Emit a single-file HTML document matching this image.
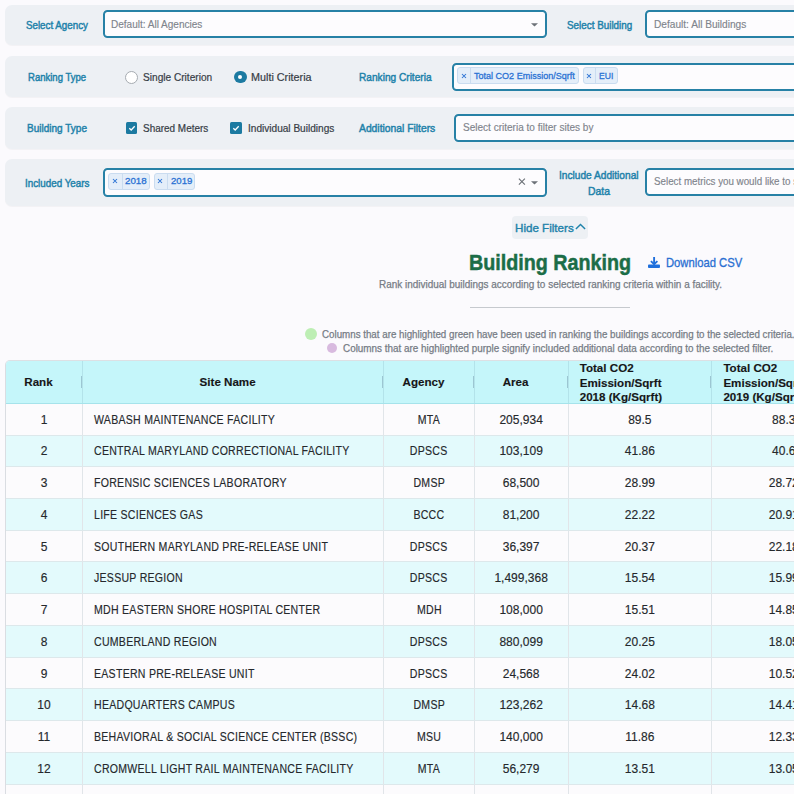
<!DOCTYPE html>
<html><head><meta charset="utf-8">
<style>
*{box-sizing:border-box;margin:0;padding:0}
html,body{width:794px;height:794px;overflow:hidden;background:#fbfafd;font-family:"Liberation Sans",sans-serif}
.a{position:absolute}
.tx{position:absolute;white-space:nowrap;line-height:1;transform-origin:0 50%}
.panel{position:absolute;left:5px;width:1100px;background:#edf0f4;border-radius:7px;box-shadow:0 1px 1px rgba(0,0,0,0.035)}
.inp{position:absolute;background:#fdfcfe;border:2px solid #2781a6;border-radius:4.5px}
.tag{position:absolute;background:#e4eef9;border:1px solid #cadcf0;border-radius:3px}
.tdiv{position:absolute;top:0;bottom:0;width:1px;background:#cadcf0}
#tw{position:absolute;left:5px;top:360px;width:900px;height:440px;border-left:1px solid #dadde2;border-top:1px solid #dde0e4;border-top-left-radius:5px;overflow:hidden}
table{position:absolute;left:0;top:-1px;border-collapse:collapse;table-layout:fixed;width:849.4px;font-size:12px;color:#25282c;-webkit-text-stroke:0.15px #25282c}
th{height:43.4px;background:#c5f6fa;font-weight:bold;font-size:11.6px;text-align:center;vertical-align:middle;position:relative;border-left:1px solid #b3e3ea;border-bottom:1px solid #a6e3eb;line-height:14px;padding-top:0.5px;color:#151517}
th:first-child{border-left:none}
th.c{padding-right:11px}
th.ml{text-align:left;padding-left:11.2px;font-size:11.6px;line-height:14.2px;padding-top:0}
th.ml span{position:relative;top:1.2px;display:block}
td{height:31.73px;text-align:center;vertical-align:middle;border-left:1px solid #e1e5e9;border-bottom:1px solid #dde8eb;background:#fcfbfd;padding-top:1px;white-space:nowrap}
tr:nth-child(even) td{background:#e3fafc}
td:first-child{border-left:none}
td.sn{text-align:left;padding-left:11.5px}
.s1{display:inline-block;font-size:12px;letter-spacing:0.3px;transform:scaleX(0.88);transform-origin:0 50%}
.s2{display:inline-block;font-size:12px;letter-spacing:0.3px;text-indent:0.3px;transform:scaleX(0.88);transform-origin:50% 50%}
th .h{position:absolute;right:0;top:16px;width:1px;height:12px;background:#9cc6d2}
</style></head><body>

<div class="panel" style="top:5px;height:40px"></div>
<div class="panel" style="top:56px;height:41px"></div>
<div class="panel" style="top:107px;height:42px"></div>
<div class="panel" style="top:159px;height:47px"></div>

<div class="inp" style="left:103px;top:10px;width:444px;height:27.8px"></div>
<div class="inp" style="left:645px;top:10px;width:400px;height:27.8px"></div>
<div class="inp" style="left:452px;top:62.7px;width:600px;height:27.9px"></div>
<div class="inp" style="left:454px;top:113.6px;width:600px;height:28.1px"></div>
<div class="inp" style="left:103px;top:168.4px;width:444px;height:28.4px"></div>
<div class="inp" style="left:645px;top:168.2px;width:400px;height:28px"></div>

<!-- carets -->
<svg class="a" style="left:530px;top:22px" width="9" height="6" viewBox="0 0 9 6"><path d="M1 1.2 L4.5 4.6 L8 1.2Z" fill="#6d7278"/></svg>
<svg class="a" style="left:530px;top:180px" width="9" height="6" viewBox="0 0 9 6"><path d="M1 1.2 L4.5 4.6 L8 1.2Z" fill="#6d7278"/></svg>
<svg class="a" style="left:516.5px;top:177px" width="9" height="9" viewBox="0 0 9 9"><path d="M1.9 1.6 L7.9 7.6 M7.9 1.6 L1.9 7.6" stroke="#6d7278" stroke-width="1.15"/></svg>

<!-- radios -->
<div class="a" style="left:125px;top:70.6px;width:13px;height:13px;border:1px solid #a6abb1;border-radius:50%;background:#fff"></div>
<div class="a" style="left:234.1px;top:70.8px;width:12.6px;height:12.6px;border-radius:50%;background:#1c7aa1"></div>
<div class="a" style="left:238.4px;top:75.1px;width:4px;height:4px;border-radius:50%;background:#fff"></div>

<!-- checkboxes -->
<div class="a" style="left:125.6px;top:122px;width:11.7px;height:11.8px;background:#1c7aa1;border-radius:1.5px"></div>
<svg class="a" style="left:125.6px;top:122px" width="12" height="12" viewBox="0 0 12 12"><path d="M3.3 6.2 L5.2 8 L8.7 4.3" stroke="#fff" stroke-width="1.3" fill="none"/></svg>
<div class="a" style="left:230.4px;top:122px;width:11.7px;height:11.8px;background:#1c7aa1;border-radius:1.5px"></div>
<svg class="a" style="left:230.4px;top:122px" width="12" height="12" viewBox="0 0 12 12"><path d="M3.3 6.2 L5.2 8 L8.7 4.3" stroke="#fff" stroke-width="1.3" fill="none"/></svg>

<!-- tags -->
<div class="tag" style="left:457.2px;top:67px;width:121.6px;height:17px"><div class="tdiv" style="left:12.3px"></div></div>
<div class="tag" style="left:582.5px;top:67px;width:35.2px;height:17px"><div class="tdiv" style="left:11.2px"></div></div>
<div class="tag" style="left:108.2px;top:173px;width:41.6px;height:16.5px"><div class="tdiv" style="left:12.6px"></div></div>
<div class="tag" style="left:153.5px;top:173px;width:41.9px;height:16.5px"><div class="tdiv" style="left:12.6px"></div></div>
<svg class="a" style="left:461px;top:72.5px" width="6" height="6" viewBox="0 0 6 6"><path d="M1 1 L5 5 M5 1 L1 5" stroke="#2a72d4" stroke-width="1.05"/></svg>
<svg class="a" style="left:585.5px;top:72.5px" width="6" height="6" viewBox="0 0 6 6"><path d="M1 1 L5 5 M5 1 L1 5" stroke="#2a72d4" stroke-width="1.05"/></svg>
<svg class="a" style="left:111.5px;top:178.3px" width="6" height="6" viewBox="0 0 6 6"><path d="M1 1 L5 5 M5 1 L1 5" stroke="#2a72d4" stroke-width="1.05"/></svg>
<svg class="a" style="left:156.8px;top:178.3px" width="6" height="6" viewBox="0 0 6 6"><path d="M1 1 L5 5 M5 1 L1 5" stroke="#2a72d4" stroke-width="1.05"/></svg>

<!-- hide filters -->
<div class="a" style="left:512px;top:216.3px;width:76px;height:22.7px;background:#edf0f4;border-radius:4px"></div>
<svg class="a" style="left:574px;top:222px" width="13" height="9" viewBox="0 0 13 9"><path d="M1.9 7.1 L6.5 2.6 L11.1 7.1" stroke="#1e82aa" stroke-width="1.45" fill="none"/></svg>

<!-- download icon -->
<svg class="a" style="left:647px;top:255px" width="14" height="14" viewBox="0 0 14 14"><path d="M7.1 2 V9" stroke="#1f6fdc" stroke-width="1.9" fill="none"/><path d="M3.9 6.1 L7.1 9.2 L10.4 6.1" stroke="#1f6fdc" stroke-width="1.8" fill="none"/><rect x="1" y="9.5" width="12" height="3.5" rx="0.9" fill="#1f6fdc"/></svg>

<div class="a" style="left:469.6px;top:307.4px;width:160.4px;height:1px;background:#c6c9ce"></div>
<div class="a" style="left:305.2px;top:328.1px;width:11.9px;height:11.9px;border-radius:50%;background:#bdeeb4"></div>
<div class="a" style="left:327px;top:342.7px;width:10.4px;height:10.4px;border-radius:50%;background:#d8badf"></div>

<div id="l1" class="tx" style="left:26.30px;top:20.00px;font-size:10.6px;font-weight:normal;color:#1e82aa;-webkit-text-stroke:0.45px #1e82aa;transform:scaleX(0.9225);">Select Agency</div>
<div id="p1" class="tx" style="left:111.40px;top:20.10px;font-size:10.2px;font-weight:normal;color:#7f848c;-webkit-text-stroke:0.15px #7f848c;transform:scaleX(0.9829);">Default: All Agencies</div>
<div id="l2" class="tx" style="left:566.60px;top:20.00px;font-size:10.6px;font-weight:normal;color:#1e82aa;-webkit-text-stroke:0.45px #1e82aa;transform:scaleX(0.9308);">Select Building</div>
<div id="p2" class="tx" style="left:653.50px;top:20.10px;font-size:10.2px;font-weight:normal;color:#7f848c;-webkit-text-stroke:0.15px #7f848c;transform:scaleX(0.9938);">Default: All Buildings</div>
<div id="l3" class="tx" style="left:28.30px;top:72.40px;font-size:10.6px;font-weight:normal;color:#1e82aa;-webkit-text-stroke:0.45px #1e82aa;transform:scaleX(0.8998);">Ranking Type</div>
<div id="t1" class="tx" style="left:142.80px;top:72.60px;font-size:10.2px;font-weight:normal;color:#373d46;-webkit-text-stroke:0.2px #373d46;transform:scaleX(0.9934);">Single Criterion</div>
<div id="t2" class="tx" style="left:251.20px;top:72.60px;font-size:10.2px;font-weight:normal;color:#373d46;-webkit-text-stroke:0.2px #373d46;transform:scaleX(1.0590);">Multi Criteria</div>
<div id="l4" class="tx" style="left:358.90px;top:72.00px;font-size:10.6px;font-weight:normal;color:#1e82aa;-webkit-text-stroke:0.45px #1e82aa;transform:scaleX(0.9554);">Ranking Criteria</div>
<div id="g1" class="tx" style="left:474.10px;top:70.50px;font-size:9.6px;font-weight:normal;color:#2a72d4;-webkit-text-stroke:0.3px #2a72d4;transform:scaleX(0.9410);">Total CO2 Emission/Sqrft</div>
<div id="g2" class="tx" style="left:599.20px;top:70.50px;font-size:9.6px;font-weight:normal;color:#2a72d4;-webkit-text-stroke:0.3px #2a72d4;transform:scaleX(0.8947);">EUI</div>
<div id="l5" class="tx" style="left:27.30px;top:123.20px;font-size:10.6px;font-weight:normal;color:#1e82aa;-webkit-text-stroke:0.45px #1e82aa;transform:scaleX(0.9454);">Building Type</div>
<div id="t3" class="tx" style="left:142.90px;top:123.80px;font-size:10.2px;font-weight:normal;color:#373d46;-webkit-text-stroke:0.2px #373d46;transform:scaleX(0.9769);">Shared Meters</div>
<div id="t4" class="tx" style="left:247.70px;top:123.80px;font-size:10.2px;font-weight:normal;color:#373d46;-webkit-text-stroke:0.2px #373d46;transform:scaleX(0.9894);">Individual Buildings</div>
<div id="l6" class="tx" style="left:358.90px;top:123.20px;font-size:10.6px;font-weight:normal;color:#1e82aa;-webkit-text-stroke:0.45px #1e82aa;transform:scaleX(0.9740);">Additional Filters</div>
<div id="p3" class="tx" style="left:462.80px;top:123.40px;font-size:10.2px;font-weight:normal;color:#7f848c;-webkit-text-stroke:0.15px #7f848c;transform:scaleX(0.9842);">Select criteria to filter sites by</div>
<div id="l7" class="tx" style="left:25.10px;top:177.90px;font-size:10.6px;font-weight:normal;color:#1e82aa;-webkit-text-stroke:0.45px #1e82aa;transform:scaleX(0.9270);">Included Years</div>
<div id="g3" class="tx" style="left:125.10px;top:176.30px;font-size:9.6px;font-weight:normal;color:#2a72d4;-webkit-text-stroke:0.3px #2a72d4;transform:scaleX(1.0173);">2018</div>
<div id="g4" class="tx" style="left:170.70px;top:176.30px;font-size:9.6px;font-weight:normal;color:#2a72d4;-webkit-text-stroke:0.3px #2a72d4;transform:scaleX(1.0027);">2019</div>
<div id="l8" class="tx" style="left:559.30px;top:169.60px;font-size:10.6px;font-weight:normal;color:#1e82aa;-webkit-text-stroke:0.45px #1e82aa;transform:scaleX(0.9579);">Include Additional</div>
<div id="l9" class="tx" style="left:588.10px;top:186.20px;font-size:10.6px;font-weight:normal;color:#1e82aa;-webkit-text-stroke:0.45px #1e82aa;transform:scaleX(0.9819);">Data</div>
<div id="p4" class="tx" style="left:653.50px;top:177.00px;font-size:10.2px;font-weight:normal;color:#7f848c;-webkit-text-stroke:0.15px #7f848c;transform:scaleX(0.9600);">Select metrics you would like to see</div>
<div id="hf" class="tx" style="left:514.90px;top:222.70px;font-size:11.8px;font-weight:normal;color:#1e82aa;-webkit-text-stroke:0.4px #1e82aa;transform:scaleX(0.9838);">Hide Filters</div>
<div id="ti" class="tx" style="left:469.40px;top:251.20px;font-size:22.8px;font-weight:bold;color:#1b6d47;-webkit-text-stroke:0.5px #1b6d47;transform:scaleX(0.8648);">Building Ranking</div>
<div id="dl" class="tx" style="left:666.00px;top:257.10px;font-size:12.2px;font-weight:normal;color:#2a6fd2;-webkit-text-stroke:0.3px #2a6fd2;transform:scaleX(0.9223);">Download CSV</div>
<div id="st" class="tx" style="left:379.00px;top:280.00px;font-size:10px;font-weight:normal;color:#767c85;-webkit-text-stroke:0.25px #767c85;transform:scaleX(0.9945);">Rank individual buildings according to selected ranking criteria within a facility.</div>
<div id="lg1" class="tx" style="left:321.70px;top:329.50px;font-size:10px;font-weight:normal;color:#767c85;-webkit-text-stroke:0.25px #767c85;transform:scaleX(0.9760);">Columns that are highlighted green have been used in ranking the buildings according to the selected criteria.</div>
<div id="lg2" class="tx" style="left:342.80px;top:343.80px;font-size:10px;font-weight:normal;color:#767c85;-webkit-text-stroke:0.25px #767c85;transform:scaleX(0.9896);">Columns that are highlighted purple signify included additional data according to the selected filter.</div>

<div id="tw"><table id="tbl"><colgroup><col style="width:76.4px"><col style="width:300.9px"><col style="width:90.4px"><col style="width:93.7px"><col style="width:143.5px"><col style="width:143.5px"></colgroup>
<thead><tr><th class="c">Rank<i class="h"></i></th><th class="c">Site Name<i class="h"></i></th><th class="c">Agency<i class="h"></i></th><th class="c">Area<i class="h"></i></th><th class="ml"><span>Total CO2<br>Emission/Sqrft<br>2018 (Kg/Sqrft)</span><i class="h"></i></th><th class="ml"><span>Total CO2<br>Emission/Sqrft<br>2019 (Kg/Sqrft)</span></th></tr></thead><tbody>
<tr><td>1</td><td class="sn"><span class="s1">WABASH MAINTENANCE FACILITY</span></td><td><span class="s2">MTA</span></td><td>205,934</td><td>89.5</td><td class="l2">88.3</td></tr>
<tr><td>2</td><td class="sn"><span class="s1">CENTRAL MARYLAND CORRECTIONAL FACILITY</span></td><td><span class="s2">DPSCS</span></td><td>103,109</td><td>41.86</td><td class="l2">40.6</td></tr>
<tr><td>3</td><td class="sn"><span class="s1">FORENSIC SCIENCES LABORATORY</span></td><td><span class="s2">DMSP</span></td><td>68,500</td><td>28.99</td><td class="l2">28.72</td></tr>
<tr><td>4</td><td class="sn"><span class="s1">LIFE SCIENCES GAS</span></td><td><span class="s2">BCCC</span></td><td>81,200</td><td>22.22</td><td class="l2">20.91</td></tr>
<tr><td>5</td><td class="sn"><span class="s1">SOUTHERN MARYLAND PRE-RELEASE UNIT</span></td><td><span class="s2">DPSCS</span></td><td>36,397</td><td>20.37</td><td class="l2">22.18</td></tr>
<tr><td>6</td><td class="sn"><span class="s1">JESSUP REGION</span></td><td><span class="s2">DPSCS</span></td><td>1,499,368</td><td>15.54</td><td class="l2">15.99</td></tr>
<tr><td>7</td><td class="sn"><span class="s1">MDH EASTERN SHORE HOSPITAL CENTER</span></td><td><span class="s2">MDH</span></td><td>108,000</td><td>15.51</td><td class="l2">14.85</td></tr>
<tr><td>8</td><td class="sn"><span class="s1">CUMBERLAND REGION</span></td><td><span class="s2">DPSCS</span></td><td>880,099</td><td>20.25</td><td class="l2">18.05</td></tr>
<tr><td>9</td><td class="sn"><span class="s1">EASTERN PRE-RELEASE UNIT</span></td><td><span class="s2">DPSCS</span></td><td>24,568</td><td>24.02</td><td class="l2">10.52</td></tr>
<tr><td>10</td><td class="sn"><span class="s1">HEADQUARTERS CAMPUS</span></td><td><span class="s2">DMSP</span></td><td>123,262</td><td>14.68</td><td class="l2">14.41</td></tr>
<tr><td>11</td><td class="sn"><span class="s1">BEHAVIORAL & SOCIAL SCIENCE CENTER (BSSC)</span></td><td><span class="s2">MSU</span></td><td>140,000</td><td>11.86</td><td class="l2">12.33</td></tr>
<tr><td>12</td><td class="sn"><span class="s1">CROMWELL LIGHT RAIL MAINTENANCE FACILITY</span></td><td><span class="s2">MTA</span></td><td>56,279</td><td>13.51</td><td class="l2">13.05</td></tr>
<tr><td></td><td></td><td></td><td></td><td></td><td></td></tr>
</tbody></table></div>
</body></html>
